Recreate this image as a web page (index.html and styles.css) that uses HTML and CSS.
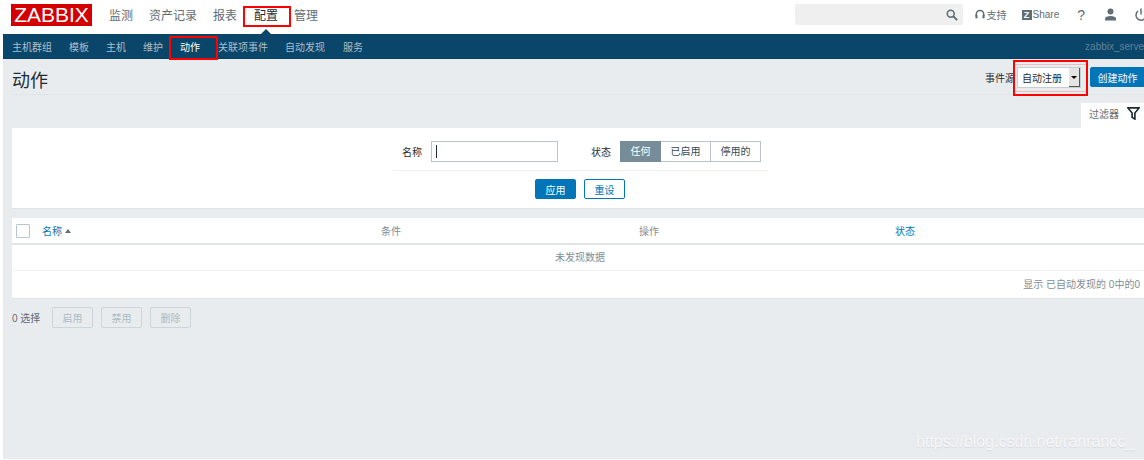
FILE: index.html
```html
<!DOCTYPE html>
<html lang="zh">
<head>
    <meta charset="UTF-8">
    <title>动作</title>
    <link rel="stylesheet" href="styles.css">
</head>
<body>
    <div class="page">
        <header class="topbar">
            <div class="logo">ZABBIX</div>
            <nav class="main-nav">
                <a>监测</a>
                <a>资产记录</a>
                <a>报表</a>
                <a class="active">配置</a>
                <a>管理</a>
            </nav>
            <div class="top-tools">
                <div class="search">
                    <svg width="12" height="12" viewBox="0 0 14 14"><circle cx="5.5" cy="5.500" r="4" fill="none" stroke="#5f6d75" stroke-width="1.800"/><path d="M8.500 8.500L13 13" stroke="#5f6d75" stroke-width="2.200"/></svg>
                </div>
                <a class="tool tool-support">
                    <svg width="10" height="12" viewBox="0 0 12 13"><path d="M1.500 8V5.500a4.500 4.500 0 0 1 9 0V8" fill="none" stroke="#5f6d75" stroke-width="1.800"/><rect x="0.500" y="6.500" width="2.500" height="4" fill="#5f6d75"/><rect x="9" y="6.500" width="2.500" height="4" fill="#5f6d75"/></svg>
                    支持
                </a>
                <a class="tool tool-share"><span class="z-box">Z</span>Share</a>
                <a class="tool tool-help">?</a>
                <a class="tool tool-user">
                    <svg width="13" height="13" viewBox="0 0 13 13"><circle cx="6.500" cy="3.500" r="3" fill="#5f6d75"/><path d="M1 12.500V10.500c0-1.500 2.500-2.500 5.500-2.500s5.500 1 5.500 2.500v2z" fill="#5f6d75"/></svg>
                </a>
                <a class="tool tool-power">
                    <svg width="12" height="13" viewBox="0 0 12 13"><path d="M3 3.200a5 5 0 1 0 6 0" fill="none" stroke="#5f6d75" stroke-width="1.500"/><path d="M6 0.500V6.500" stroke="#5f6d75" stroke-width="1.500"/></svg>
                </a>
            </div>
        </header>

        <div class="content">
            <nav class="sub-nav">
                <a>主机群组</a>
                <a>模板</a>
                <a>主机</a>
                <a>维护</a>
                <a class="active">动作</a>
                <a class="nudge">关联项事件</a>
                <a>自动发现</a>
                <a class="nudge">服务</a>
                <span class="server-name">zabbix_serve</span>
            </nav>

            <div class="title-row">
                <h1>动作</h1>
                <div class="title-controls">
                    <label>事件源</label>
                    <div class="fake-select">
                        <span>自动注册</span>
                        <span class="select-btn"></span>
                    </div>
                    <button class="btn btn-create">创建动作</button>
                </div>
            </div>

            <div class="filter-tab-row">
                <div class="filter-tab">
                    过滤器
                    <svg width="13" height="13" viewBox="0 0 14 14"><path d="M1 1H13L8.500 6.500V13L5.500 11V6.500Z" fill="none" stroke="#1f2c33" stroke-width="1.800"/></svg>
                </div>
            </div>

            <section class="filter-box">
                <div class="filter-fields">
                    <label class="name-label">名称</label>
                    <div class="text-input"><span class="caret"></span></div>
                    <label class="state-label">状态</label>
                    <div class="segmented">
                        <span class="seg on">任何</span>
                        <span class="seg">已启用</span>
                        <span class="seg">停用的</span>
                    </div>
                </div>
                <div class="filter-actions">
                    <button class="btn">应用</button>
                    <button class="btn btn-outline">重设</button>
                </div>
            </section>

            <section class="table-box">
                <div class="row row-head">
                    <div class="col col-name"><span class="check"></span><a class="link">名称</a><span class="sort-arrow"></span></div>
                    <div class="col col-cond">条件</div>
                    <div class="col col-op">操作</div>
                    <div class="col col-state"><a class="link">状态</a></div>
                </div>
                <div class="row row-empty">未发现数据</div>
                <div class="row row-foot">显示 已自动发现的 0中的0</div>
            </section>

            <div class="bulk-row">
                <span class="bulk-count">0 选择</span>
                <button class="btn-off">启用</button>
                <button class="btn-off">禁用</button>
                <button class="btn-off">删除</button>
            </div>

            <div class="watermark">https://blog.csdn.net/ranrancc_</div>
        </div>

        <div class="mark mark-config"></div>
        <div class="mark mark-action"></div>
        <div class="mark mark-select"></div>
    </div>
</body>
</html>
```

FILE: styles.css
```css
* {
    box-sizing: border-box;
}
html, body {
    margin: 0;
    padding: 0;
    background: #fff;
}
body {
    font-family: "Liberation Sans", "Noto Sans CJK SC", sans-serif;
    font-size: 10px;
    color: #1f2c33;
}
.page {
    position: relative;
    width: 1144px;
    height: 460px;
    overflow: hidden;
}

/* top bar */
.topbar {
    display: flex;
    align-items: center;
    height: 34px;
    padding-left: 11px;
    background: #fff;
}
.logo {
    width: 81px;
    height: 22px;
    margin-top: -4px;
    background: #d40000;
    color: #fff;
    font-size: 21px;
    line-height: 22px;
    text-align: center;
}
.main-nav {
    display: flex;
    gap: 16px;
    margin-left: 17px;
    margin-top: -5px;
    font-size: 12px;
    color: #5f6d75;
}
.main-nav a.active {
    color: #1f2c33;
    position: relative;
    margin-left: 1px;
}
.main-nav a.active::after {
    content: "";
    position: absolute;
    left: 7px;
    bottom: -11px;
    border: 5px solid transparent;
    border-top: 0;
    border-bottom: 5px solid #0a466a;
}
.top-tools {
    display: flex;
    align-items: center;
    height: 34px;
    margin-left: auto;
    margin-top: -5px;
    color: #5f6d75;
}
.search {
    display: flex;
    align-items: center;
    justify-content: flex-end;
    width: 168px;
    height: 21px;
    padding-right: 5px;
    background: #efefef;
    border-radius: 2px;
}
.tool {
    display: flex;
    align-items: center;
    gap: 3px;
}
.tool-support { margin-left: 12px; gap: 2px; }
.tool-share { margin-left: 15px; gap: 1px; }
.z-box {
    width: 10px;
    height: 10px;
    background: #5f6d75;
    color: #fff;
    font-size: 9px;
    font-weight: bold;
    line-height: 10px;
    text-align: center;
}
.tool-help { margin-left: 18px; font-size: 14px; }
.tool-user { margin-left: 19px; }
.tool-power { margin-left: 18px; margin-right: -3px; }

/* everything below the top bar sits 3px in */
.content {
    position: relative;
    height: 425px;
    margin-left: 3px;
    background: #e9ecef;
}
.sub-nav {
    display: flex;
    align-items: center;
    height: 25px;
    padding-left: 9px;
    gap: 17px;
    background: #0a466a;
    border-bottom: 1px solid #0a3f60;
    color: #a9bfcc;
}
.sub-nav a {
    position: relative;
}
.sub-nav a.nudge {
    margin-left: 1px;
}
.sub-nav a.active {
    color: #fff;
}
.sub-nav a.active::after {
    content: "";
    position: absolute;
    left: 0;
    right: 0;
    bottom: -6px;
    height: 2px;
    background: #8ec5e8;
}
.server-name {
    margin-left: auto;
    color: #5f8299;
    white-space: nowrap;
}

.title-row {
    display: flex;
    align-items: center;
    justify-content: space-between;
    height: 36px;
    margin-left: 9px;
    border-bottom: 1px solid #dfe4e7;
}
h1 {
    margin: 4px 0 0;
    font-size: 18px;
    font-weight: normal;
    color: #1f2c33;
}
.title-controls {
    display: flex;
    align-items: center;
    margin-top: 1px;
}
.fake-select {
    display: flex;
    align-items: center;
    justify-content: space-between;
    width: 64px;
    height: 21px;
    margin: 0 9px 0 2px;
    padding: 0 0 0 4px;
    background: #fff;
    border: 1px solid #c4ced3;
}
.select-btn {
    position: relative;
    width: 11px;
    height: 19px;
    background: #e4e4e4;
    border-right: 1px solid #555;
    border-bottom: 1px solid #555;
}
.select-btn::after {
    content: "";
    position: absolute;
    left: 2px;
    top: 8px;
    border: 3px solid transparent;
    border-bottom: 0;
    border-top: 3px solid #000;
}
.btn {
    height: 20px;
    padding: 0 10px;
    background: #0275b8;
    border: 1px solid #0275b8;
    border-radius: 2px;
    color: #fff;
    font-family: inherit;
    font-size: 10px;
}
.btn-create {
    width: 55px;
    margin-right: -1px;
    padding: 0;
}
.btn-outline {
    background: #fff;
    color: #0275b8;
}

/* filter */
.filter-tab-row {
    display: flex;
    justify-content: flex-end;
    height: 33px;
    padding-top: 8px;
}
.filter-tab {
    display: flex;
    align-items: center;
    justify-content: space-between;
    width: 63px;
    height: 25px;
    padding: 0 4px 5px 8px;
    background: #fff;
    color: #5f6d75;
}
.filter-box {
    height: 81px;
    margin-left: 9px;
    background: #fff;
    border-bottom: 1px solid #dfe4e7;
}
.filter-fields {
    display: flex;
    align-items: center;
    width: 375px;
    height: 43px;
    margin-left: 381px;
    padding: 5px 0 0 9px;
    border-bottom: 1px solid #eef0f2;
}
.text-input {
    display: flex;
    align-items: center;
    width: 127px;
    height: 21px;
    margin-left: 9px;
    padding-left: 4px;
    border: 1px solid #b8c5cc;
}
.caret {
    width: 1px;
    height: 13px;
    background: #1f2c33;
}
.state-label {
    margin-left: 33px;
}
.segmented {
    display: flex;
    margin-left: 9px;
}
.seg {
    width: 50px;
    height: 21px;
    line-height: 19px;
    text-align: center;
    background: #fff;
    border: 1px solid #b8c5cc;
    border-left: 0;
    color: #384a54;
}
.seg.on {
    width: 41px;
    background: #768d99;
    border: 1px solid #768d99;
    color: #fff;
}
.filter-actions {
    display: flex;
    justify-content: center;
    gap: 8px;
    padding: 8px 0 0 4px;
}
.filter-actions .btn {
    width: 41px;
    padding: 0;
}

/* table */
.table-box {
    margin: 9px 0 0 9px;
    background: #fff;
    border-bottom: 1px solid #dfe4e7;
}
.row-head {
    display: flex;
    align-items: center;
    height: 27px;
    border-bottom: 2px solid #dfe4e7;
    color: #7f8d95;
}
.col-name {
    display: flex;
    align-items: center;
    width: 369px;
    padding-left: 4px;
}
.col-cond { width: 258px; }
.col-op { width: 256px; }
.check {
    width: 14px;
    height: 14px;
    margin-right: 12px;
    border: 1px solid #b8c5cc;
    border-radius: 1px;
}
.link {
    color: #0275b8;
}
.sort-arrow {
    margin-left: 3px;
    border: 3px solid transparent;
    border-top: 0;
    border-bottom: 4px solid #5f6d75;
}
.row-empty {
    height: 26px;
    padding-left: 4px;
    border-bottom: 1px solid #eef0f2;
    color: #7f8d95;
    line-height: 25px;
    text-align: center;
}
.row-foot {
    height: 27px;
    padding-right: 4px;
    color: #7f8d95;
    line-height: 27px;
    text-align: right;
}

.bulk-row {
    display: flex;
    align-items: center;
    gap: 8px;
    margin: 8px 0 0 9px;
    color: #5f6d75;
}
.bulk-count {
    width: 32px;
}
.btn-off {
    width: 41px;
    height: 21px;
    padding: 0;
    background: #e9ecef;
    border: 1px solid #ccd5d9;
    border-radius: 2px;
    color: #acbbc2;
    font-family: inherit;
    font-size: 10px;
}

.watermark {
    position: absolute;
    right: 10px;
    bottom: 8px;
    color: #f5f6f7;
    font-size: 16px;
    letter-spacing: -0.030px;
    text-shadow: 0 1px 1px #d5d8da;
}

/* red boxes drawn on the screenshot */
.mark {
    position: absolute;
    border: 2px solid #f00;
}
.mark-config { left: 243px; top: 6px; width: 48px; height: 21px; }
.mark-action { left: 169px; top: 36px; width: 49px; height: 24px; }
.mark-select {
    left: 1013px;
    top: 60px;
    width: 75px;
    height: 36px;
    box-shadow: inset 0 2px 0 #e9ecef, inset 0 3px 0 #eebcbc, inset 0 -2px 0 #e9ecef, inset 0 -3px 0 #eebcbc;
}
```
